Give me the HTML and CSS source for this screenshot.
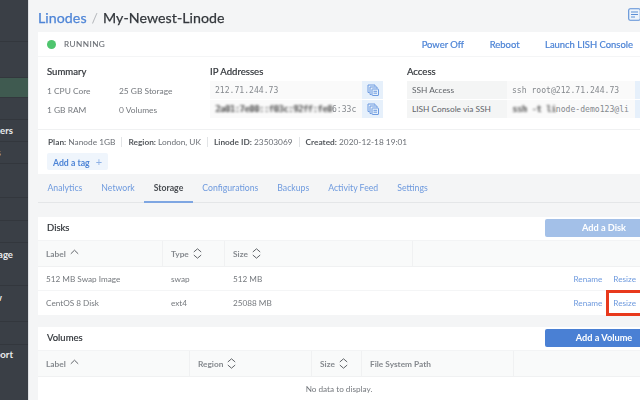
FILE: index.html
```html
<!DOCTYPE html>
<html lang="en">
<head>
<meta charset="utf-8">
<title>My-Newest-Linode</title>
<link rel="stylesheet" href="styles.css">
</head>
<body>
<svg class="defs" width="0" height="0" aria-hidden="true">
  <symbol id="sort" viewBox="0 0 9 11"><path d="M.8 4 4.500 .8 8.200 4M.8 7 4.500 10.200 8.200 7" fill="none" stroke="currentColor" stroke-width="1"/></symbol>
  <symbol id="up" viewBox="0 0 9 6"><path d="M.8 4.800 4.500 1.200 8.200 4.800" fill="none" stroke="currentColor" stroke-width="1"/></symbol>
  <symbol id="copy" viewBox="0 0 12 12"><g fill="none" stroke="currentColor" stroke-width="1"><path d="M2.500 8.500H1V1h7v1.500"/><path d="M4.500 10.500H3V3h7v1.500"/><rect x="5" y="5" width="6.500" height="6.500" rx=".5"/><path d="M6.500 7.300h3.500M6.500 9.200h3.500"/></g></symbol>
</svg>
<div class="page">
  <nav class="side">
    <div class="nav h42"></div>
    <div class="nav h36"></div>
    <div class="nav h20 active"></div>
    <div class="nav h22"></div>
    <div class="nav h22 strong"><span>NodeBalancers</span></div>
    <div class="nav h22 dim"><span>Domains</span></div>
    <div class="nav h34"></div>
    <div class="nav h23"></div>
    <div class="nav h22"></div>
    <div class="nav h43 strong lh24"><span>Object Storage</span></div>
    <div class="nav h36 far lh24"><span>Longview</span></div>
    <div class="nav h23"></div>
    <div class="nav strong lh20"><span>Get Support</span></div>
  </nav>
  <main class="main">
    <header class="title">
      <h1><a class="crumb">Linodes</a><i class="slash">/</i>My-Newest-Linode</h1>
      <svg class="doc" width="13" height="13" viewBox="0 0 13 13"><rect x=".7" y=".7" width="11.600" height="11.600" rx="1.500" fill="#eef4fb" stroke="#5b8fd6" stroke-width="1.100"/><path d="M3 4h7M3 6.500h7M3 9h4" stroke="#5b8fd6" stroke-width="1.100"/></svg>
    </header>

    <section class="card">
      <div class="status">
        <span class="dot"></span><span class="state">RUNNING</span>
        <div class="actions"><a>Power Off</a><a>Reboot</a><a>Launch LISH Console</a></div>
      </div>
      <div class="summary">
        <div>
          <h2>Summary</h2>
          <div class="specs">
            <span>1 CPU Core</span><span>25 GB Storage</span>
            <span>1 GB RAM</span><span>0 Volumes</span>
          </div>
        </div>
        <div>
          <h2>IP Addresses</h2>
          <div class="ip"><code>212.71.244.73</code><b class="copy"><svg width="12" height="12"><use href="#copy"/></svg></b></div>
          <div class="ip"><code><s>2a01:7e00::f03c:92ff:fe0</s>6:33c</code><b class="copy"><svg width="12" height="12"><use href="#copy"/></svg></b></div>
        </div>
        <div>
          <h2>Access</h2>
          <div class="acc"><span>SSH Access</span><code>ssh root@212.71.244.73</code><b class="copy"></b></div>
          <div class="acc"><span>LISH Console via SSH</span><code><s>ssh -t li</s>node-demo123@li</code><b class="copy"></b></div>
        </div>
      </div>
      <div class="meta">
        <span><b>Plan:</b> Nanode 1GB</span><span><b>Region:</b> London, UK</span><span><b>Linode ID:</b> 23503069</span><span><b>Created:</b> 2020-12-18 19:01</span>
      </div>
      <button class="tag">Add a tag<i>+</i></button>
    </section>

    <nav class="tabs">
      <a>Analytics</a><a>Network</a><a class="on">Storage</a><a>Configurations</a><a>Backups</a><a>Activity Feed</a><a>Settings</a>
    </nav>

    <section class="panel">
      <div class="phead"><h3>Disks</h3><button class="btn off">Add a Disk</button></div>
      <div class="grid disks thead">
        <div>Label<svg class="ic-up" width="9" height="6"><use href="#up"/></svg></div>
        <div>Type<svg class="ic" width="9" height="11"><use href="#sort"/></svg></div>
        <div>Size<svg class="ic" width="9" height="11"><use href="#sort"/></svg></div>
        <div></div>
      </div>
      <div class="grid disks tr">
        <div>512 MB Swap Image</div><div>swap</div><div>512 MB</div>
        <div class="links"><a>Rename</a><a>Resize</a></div>
      </div>
      <div class="grid disks tr">
        <div>CentOS 8 Disk</div><div>ext4</div><div>25088 MB</div>
        <div class="links"><a>Rename</a><a class="mark">Resize</a></div>
      </div>
    </section>

    <section class="panel second">
      <div class="phead"><h3>Volumes</h3><button class="btn">Add a Volume</button></div>
      <div class="grid vols thead">
        <div>Label<svg class="ic-up" width="9" height="6"><use href="#up"/></svg></div>
        <div>Region<svg class="ic" width="9" height="11"><use href="#sort"/></svg></div>
        <div>Size<svg class="ic" width="9" height="11"><use href="#sort"/></svg></div>
        <div>File System Path</div>
        <div></div>
      </div>
      <p class="empty">No data to display.</p>
    </section>
  </main>
</div>
</body>
</html>
```

FILE: styles.css
```css
*, *::after { box-sizing: border-box; }
html, body { margin: 0; padding: 0; }
body { width: 640px; height: 400px; overflow: hidden; font-family: Lato, sans-serif; font-size: 8.400px; color: #606469; background: #f4f5f6; }
.defs { position: absolute; }
a { color: #4d84d6; }
h1, h2, h3, p { margin: 0; font-weight: 400; }
i { font-style: normal; }
code { font-family: "DejaVu Sans Mono", monospace; font-size: 8.100px; color: #85898e; white-space: nowrap; }
code s { text-decoration: none; color: #5a5a5a; filter: blur(.9px); display: inline-block; text-shadow: 1px 0 #666; }

.page { display: flex; width: 640px; height: 400px; overflow: hidden; filter: blur(.35px); }

.side { flex: 0 0 29px; width: 29px; height: 400px; background: #3a3f46; border-right: 1px solid #dfe1e4; overflow: hidden; color: #e9ebed; font-size: 9.600px; font-weight: 700; }
.nav { display: flex; justify-content: flex-end; white-space: nowrap; overflow: hidden; border-bottom: 1px solid #33373d; line-height: 22px; padding-right: 15px; }
.nav span { flex: none; }
.h42 { height: 42px; } .h36 { height: 36px; } .h20 { height: 20px; } .h22 { height: 22px; }
.h34 { height: 34px; } .h23 { height: 23px; } .h43 { height: 43px; }
.lh24 { line-height: 24px; } .lh20 { line-height: 20px; border-bottom: 0; }
.active { background: #3f5a50; }
.dim { color: #b9bdc2; font-weight: 400; padding-right: 27px; }
.far { padding-right: 26px; }

.main { flex: none; width: 611px; padding-left: 9px; }
.title { display: flex; align-items: center; justify-content: space-between; height: 32px; padding: 3px 0 0; }
h1 { font-size: 14.200px; color: #32363b; letter-spacing: .05px; -webkit-text-stroke: .25px #32363b; }
.crumb { color: #4d84d6; -webkit-text-stroke: .25px #4d84d6; }
.slash { color: #b6b9bd; margin: 0 5px; -webkit-text-stroke: 0; }
.doc { flex: none; position: relative; left: 1px; top: -3px; }

.card { background: #fff; height: 142px; }
.status { display: flex; align-items: center; height: 25px; padding: 0 7px 0 9px; border-bottom: 1px solid #f4f5f6; }
.dot { width: 9px; height: 9px; border-radius: 50%; background: #4fc56e; }
.state { margin-left: 8px; font-size: 8.200px; letter-spacing: .45px; color: #6b6f75; -webkit-text-stroke: .1px #6b6f75; }
.actions { margin-left: auto; display: flex; gap: 25.500px; font-size: 9.450px; }
.actions a { -webkit-text-stroke: .2px #4d84d6; }

.summary { display: grid; grid-template-columns: 163px 197px 1fr; height: 73px; padding: 8px 0 0 9px; border-bottom: 1px solid #f0f1f2; overflow: hidden; }
h2 { font-size: 9.600px; line-height: 13px; height: 16px; color: #32363b; -webkit-text-stroke: .2px #32363b; }
.specs { display: grid; grid-template-columns: 72px 1fr; grid-auto-rows: 19px; align-items: center; font-size: 8.400px; color: #75797e; }
.ip { display: flex; width: 173px; height: 19px; }
.ip code { flex: 1; display: flex; align-items: center; padding-left: 5px; background: #fafafa; overflow: hidden; border-bottom: 1px solid #fff; }
.copy { display: flex; align-items: center; justify-content: center; flex: 0 0 21px; height: 19px; background: #e6f0fb; color: #6c9ae0; border-bottom: 1px solid #fff; font-weight: 400; }
.acc { display: flex; height: 19px; width: 240px; }
.acc span { flex: 0 0 100px; display: flex; align-items: center; padding-left: 5px; background: #f4f5f5; color: #606469; font-size: 8.300px; border-bottom: 1px solid #fff; }
.acc code { flex: 0 0 128px; display: flex; align-items: center; padding-left: 5px; background: #fafafa; overflow: hidden; border-bottom: 1px solid #fff; }

.meta { display: flex; height: 23px; align-items: center; padding-left: 10px; color: #6b6f75; font-size: 8.300px; white-space: nowrap; }
.meta span { padding-right: 6px; margin-right: 6px; border-right: 1px solid #e2e4e6; line-height: 10px; }
.meta span:last-child { border: 0; }
.meta b { color: #54585d; }
.tag { display: block; margin-left: 9px; width: 61px; height: 17px; padding: 0; border: 0; border-radius: 2px; background: #eff5fc; color: #4d84d6; font: 700 8.700px Lato, sans-serif; text-align: center; }
.tag i { margin-left: 6px; color: #8fb2e6; font-weight: 400; font-size: 11px; }

.tabs { display: flex; height: 29px; border-bottom: 1px solid #e4e6e8; align-items: stretch; font-size: 8.700px; }
.tabs a { padding: 0 9.500px; line-height: 28px; color: #6e9ade; white-space: nowrap; }
.tabs .on { color: #4a4e53; font-weight: 700; border-bottom: 2px solid #7ea6e2; height: 29px; }

.panel { margin-top: 14px; background: #fff; }
.second { margin-top: 12px; }
.phead { display: flex; justify-content: space-between; align-items: center; height: 23px; padding: 0 0 2px 9px; }
h3 { font-size: 9.500px; color: #32363b; -webkit-text-stroke: .2px #32363b; }
.btn { flex: none; width: 118px; height: 18px; padding: 0; margin-right: -23px; border: 0; border-radius: 2px; background: #4a80d4; color: #fff; font: 700 9.200px Lato, sans-serif; }
.btn.off { background: #a3c0e8; }
.grid { display: grid; }
.disks { grid-template-columns: 125px 62px 188px 1fr; }
.vols { grid-template-columns: 152px 122px 50px 152px 1fr; }
.grid > div { padding-left: 8px; display: flex; align-items: center; }
.thead { height: 27px; background: #f9fafa; border-top: 1px solid #f3f4f5; border-bottom: 1px solid #f0f1f2; font-size: 8.300px; font-weight: 700; color: #84888d; }
.thead > div { border-right: 1px solid #f0f1f2; }
.thead > div:last-child { border-right: 0; }
.ic { margin-left: 4px; color: #606469; }
.ic-up { margin: -4px 0 0 4px; color: #606469; }
.tr { height: 24px; border-bottom: 1px solid #f4f5f6; color: #75797e; font-size: 8.200px; }
.tr:last-child { border-bottom: 0; }
.links { justify-content: flex-end; gap: 11px; padding-right: 4px; font-size: 8.200px; }
.links a { color: #6e9ade; position: relative; }
.mark::after { content: ""; position: absolute; left: -7px; top: -8px; width: 60px; height: 26px; border: 3px solid #e8391c; }
.empty { text-align: center; height: 24px; line-height: 24px; color: #75797e; font-size: 8.200px; }
```
